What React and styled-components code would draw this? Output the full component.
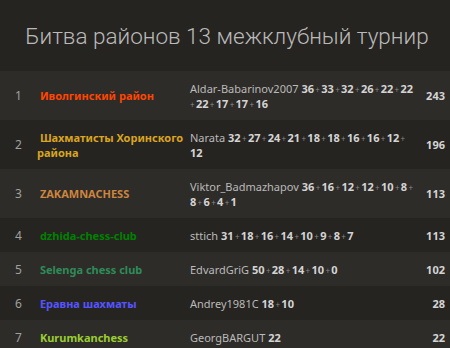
import React from 'react'
import styled, { createGlobalStyle } from 'styled-components'

const GlobalStyle = createGlobalStyle`
  html, body {
    margin: 0;
    padding: 0;
    background: #262421;
  }
  body {
    font-family: 'Noto Sans', 'Open Sans', sans-serif;
    color: #bababa;
  }
`

const teams = [
  { rank: 1, name: 'Иволгинский район', color: '#ff4500', player: 'Aldar-Babarinov2007', scores: [36, 33, 32, 26, 22, 22, 22, 17, 17, 16], total: 243 },
  { rank: 2, name: 'Шахматисты Хоринского района', color: '#daa520', player: 'Narata', scores: [32, 27, 24, 21, 18, 18, 16, 16, 12, 12], total: 196 },
  { rank: 3, name: 'ZAKAMNACHESS', color: '#cd853f', player: 'Viktor_Badmazhapov', scores: [36, 16, 12, 12, 10, 8, 8, 6, 4, 1], total: 113 },
  { rank: 4, name: 'dzhida-chess-club', color: '#008000', player: 'sttich', scores: [31, 18, 16, 14, 10, 9, 8, 7], total: 113 },
  { rank: 5, name: 'Selenga chess club', color: '#2e8b57', player: 'EdvardGriG', scores: [50, 28, 14, 10, 0], total: 102 },
  { rank: 6, name: 'Еравна шахматы', color: '#5555ff', player: 'Andrey1981C', scores: [18, 10], total: 28 },
  { rank: 7, name: 'Kurumkanchess', color: '#9acd32', player: 'GeorgBARGUT', scores: [22], total: 22 },
]

const App = () => {
  return (
    <Page>
      <GlobalStyle />
      <Title>Битва районов 13 межклубный турнир</Title>
      <Table>
        {teams.map((t) => (
          <Row key={t.rank} $odd={t.rank % 2 === 1}>
            <Rank>{t.rank}</Rank>
            <Team $color={t.color}>&nbsp;{t.name}</Team>
            <Players>
              {t.player}{' '}
              {t.scores.map((s, i) => (
                <React.Fragment key={i}>
                  {i > 0 && <Plus>{'\u2009+\u2009'}</Plus>}
                  <Score>{s}</Score>
                </React.Fragment>
              ))}
            </Players>
            <Total>{t.total}</Total>
          </Row>
        ))}
      </Table>
    </Page>
  )
}

const Page = styled.div`
  width: 450px;
  height: 348px;
  overflow: hidden;
  background: #262421;
`

const Title = styled.h1`
  margin: 0;
  height: 71px;
  padding-left: 4px;
  display: flex;
  align-items: center;
  justify-content: center;
  font-family: Roboto, 'Noto Sans', sans-serif;
  font-weight: 300;
  font-size: 22.5px;
  color: #bababa;
`

const Table = styled.div`
  display: flex;
  flex-direction: column;
`

const Row = styled.div`
  display: grid;
  grid-template-columns: 37px 153px 1fr 27px;
  align-items: center;
  padding: 9.5px 5px 9.5px 0;
  background: ${(p) => (p.$odd ? '#2e2c29' : '#262421')};
  font-size: 11px;
  line-height: 15px;
`

const Rank = styled.div`
  text-align: center;
  color: #a0a0a0;
  font-size: 12px;
`

const Team = styled.div`
  color: ${(p) => p.$color};
  font-weight: 700;
`

const Players = styled.div`
  color: #bababa;
`

const Score = styled.strong`
  line-height: 1;
  font-weight: 700;
  color: #d4d4d4;
`

const Plus = styled.span`
  font-size: 8px;
  line-height: 1;
  color: #8a8a8a;
`

const Total = styled.div`
  text-align: right;
  font-weight: 700;
  color: #d4d4d4;
`

export default App
